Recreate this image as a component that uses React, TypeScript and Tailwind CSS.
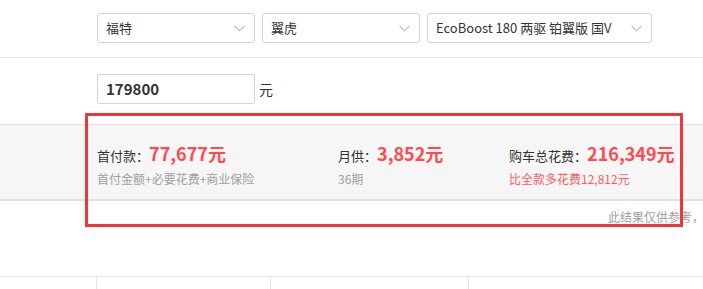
import React from "react";

const font = { fontFamily: '"Noto Sans CJK SC", "Noto Sans", sans-serif' };

function Chevron() {
  return (
    <svg width="11" height="7" viewBox="0 0 11 7" className="shrink-0">
      <polyline points="0.5,0.8 5.5,5.8 10.5,0.8" fill="none" stroke="#b8b8b8" strokeWidth="1.1" />
    </svg>
  );
}

function Select({ label, width }: { label: string; width: string }) {
  return (
    <div className={`${width} h-[30px] border border-[#d4d4d4] rounded-[3px] bg-white flex items-center justify-between pl-[8px] pr-[9px] text-[13px] text-[#333]`}>
      <span className="whitespace-nowrap">{label}</span>
      <Chevron />
    </div>
  );
}

function Item({ label, value, sub, subRed, width }: { label: string; value: string; sub: string; subRed?: boolean; width: string }) {
  return (
    <div className={`${width} shrink-0`}>
      <div className="flex items-baseline h-[24px] whitespace-nowrap">
        <span className="text-[13px] text-[#333]">{label}</span>
        <span className="text-[18px] font-bold text-[#ff4a4f] leading-[24px]">{value}</span>
      </div>
      <div className={`mt-[5px] text-[12px] leading-[18px] whitespace-nowrap ${subRed ? "text-[#ff5a5f]" : "text-[#a0a0a0]"}`}>{sub}</div>
    </div>
  );
}

export default function App() {
  return (
    <div className="w-[703px] h-[289px] overflow-hidden bg-white relative" style={font}>
      <div className="h-[58px] border-b border-[#e6e6e6] pt-[13px] pl-[97px] flex gap-[7px]">
        <Select label="福特" width="w-[158px]" />
        <Select label="翼虎" width="w-[158px]" />
        <Select label="EcoBoost 180 两驱 铂翼版 国V" width="w-[225px]" />
      </div>
      <div className="h-[66px] pt-[16px] pl-[97px] flex items-start gap-[4px]">
        <div className="w-[158px] h-[30px] border border-[#d4d4d4] rounded-[2px] flex items-center pl-[8px] text-[15px] font-bold text-[#333]">179800</div>
        <span className="text-[14px] text-[#333] leading-[30px]">元</span>
      </div>
      <div className="h-[77px] bg-[#f6f6f6] border-t border-[#e2e2e2] border-b-2 border-b-[#e0e0e0] pt-[16px] pl-[97px] flex">
        <Item label="首付款：" value="77,677元" sub="首付金额+必要花费+商业保险" width="w-[241px]" />
        <Item label="月供：" value="3,852元" sub="36期" width="w-[171px]" />
        <Item label="购车总花费：" value="216,349元" sub="比全款多花费12,812元" subRed width="w-[190px]" />
      </div>
      <div className="h-[75px] pt-[7px] pl-[608px] text-[12px] leading-[18px] text-[#a0a0a0] whitespace-nowrap">
        此结果仅供参考，
      </div>
      <div className="border-t border-[#e4e4e4] flex h-[20px]">
        <div className="w-[97px] border-r border-[#e4e4e4]" />
        <div className="w-[174px] border-r border-[#e4e4e4]" />
        <div className="w-[198px] border-r border-[#e4e4e4]" />
      </div>
      <div className="absolute left-[85px] top-[113px] w-[598px] h-[114px] border-[3px] border-[#ef3737] pointer-events-none" />
    </div>
  );
}
